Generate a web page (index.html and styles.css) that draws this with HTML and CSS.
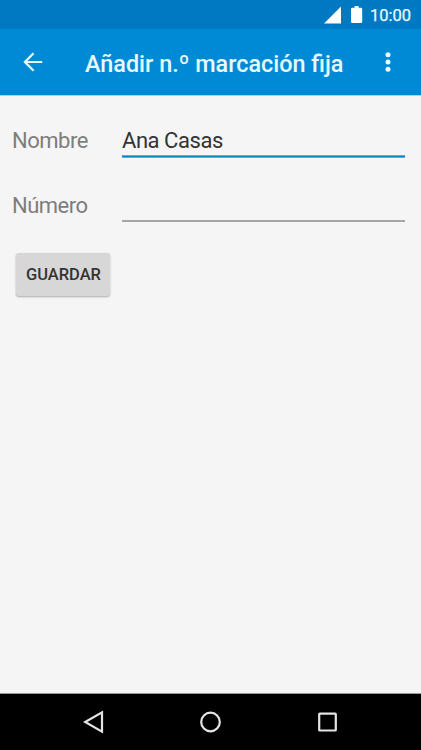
FILE: index.html
```html
<!DOCTYPE html>
<html lang="es">
<head>
<meta charset="utf-8">
<title>Añadir n.º marcación fija</title>
<link rel="stylesheet" href="styles.css">
</head>
<body>
<div class="screen">
  <div class="status">
    <svg class="signal" width="18" height="18" viewBox="0 0 18 18"><path d="M0 17.600 17 .6v17z" fill="#fff"/></svg>
    <svg class="battery" width="12" height="18" viewBox="0 0 12 18"><path d="M3.600 0h4v1.800H10q1.200 0 1.200 1.200v12.800q0 1.200-1.200 1.200H1.200Q0 17 0 15.800V3q0-1.200 1.200-1.200h2.400z" fill="#fff"/></svg>
    <span class="clock">10:00</span>
  </div>
  <header class="bar">
    <svg class="back" width="20" height="20" viewBox="0 0 20 20" fill="none" stroke="#e6fbff" stroke-width="2.200"><path d="M19.200 10H2.200M10.600 1.300 1.900 10l8.700 8.700"/></svg>
    <h1 class="title">Añadir n.º marcación fija</h1>
    <svg class="more" width="6" height="20" viewBox="0 0 6 20" fill="#e6fbff"><circle cx="3" cy="2.800" r="2.500"/><circle cx="3" cy="10" r="2.500"/><circle cx="3" cy="17.200" r="2.500"/></svg>
  </header>
  <main class="form">
    <div class="row">
      <span class="label">Nombre</span>
      <div class="field active">Ana Casas</div>
    </div>
    <div class="row">
      <span class="label">Número</span>
      <div class="field"></div>
    </div>
    <button class="save">GUARDAR</button>
  </main>
  <nav class="nav">
    <svg width="22" height="24" viewBox="0 0 22 24"><path d="M2.200 12 19 2.300v19.400z"/></svg>
    <svg width="22" height="24" viewBox="0 0 22 24"><circle cx="10.500" cy="12" r="9.300"/></svg>
    <svg width="22" height="24" viewBox="0 0 22 24"><rect x="2.200" y="3.700" width="16.600" height="16.800" rx=".5"/></svg>
  </nav>
</div>
</body>
</html>
```
FILE: styles.css
```css
* { box-sizing: border-box; }
body { margin: 0; font-family: Roboto, "Liberation Sans", sans-serif; }
svg { display: block; flex: none; }
.screen {
  width: 421px;
  height: 750px;
  display: flex;
  flex-direction: column;
  background: #f5f5f5;
  overflow: hidden;
}
.status {
  height: 29px;
  flex: none;
  background: #0079c3;
  display: flex;
  align-items: flex-start;
  padding: 6px 0 0 324px;
}
.battery { margin-left: 9px; }
.clock {
  margin-left: 7px;
  font-size: 16.500px;
  line-height: 20px;
  color: #e6fbff;
  font-weight: 400;
  -webkit-text-stroke: .25px #e6fbff;
}
.bar {
  height: 67px;
  flex: none;
  background: #008ad6;
  border-bottom: 1px solid #a5d3ec;
  display: flex;
  align-items: center;
  padding-left: 23px;
}
.title {
  margin: 3px 0 0 42px;
  width: 300px;
  font-size: 23.400px;
  line-height: 30px;
  font-weight: 500;
  color: #e6fbff;
  white-space: nowrap;
}
.form { flex: 1; padding: 29px 16px 0 12px; }
.row { display: flex; height: 65px; }
.label {
  width: 110px;
  font-size: 22px;
  line-height: 31px;
  letter-spacing: -.5px;
  color: #7d7d7d;
}
.field {
  flex: 1;
  height: 32px;
  border-bottom: 2px solid #a6a6a6;
  font-size: 22px;
  line-height: 31px;
  letter-spacing: -.45px;
  color: #333;
}
.field.active {
  height: 33px;
  border-bottom: 0;
  background: linear-gradient(#4ab4e0 0 1px, #0f86c4 1px 2px, #4ab4e0 2px) bottom / 100% 3px no-repeat;
}
.save {
  display: block;
  width: 94px;
  height: 43px;
  margin: -2px 0 0 4px;
  padding: 1px 0 0 1px;
  border: 0;
  border-radius: 3px;
  background: #d7d7d7;
  box-shadow: 0 1px 2px rgba(0, 0, 0, .3);
  font: 500 16.500px/42px Roboto, "Liberation Sans", sans-serif;
  letter-spacing: -.05px;
  color: #333;
}
.nav {
  height: 57px;
  flex: none;
  background: #000;
  border-top: 1px solid #999;
  display: flex;
  justify-content: center;
  align-items: center;
  gap: 95px;
}
.nav svg { fill: none; stroke: #e4e4e4; stroke-width: 2.200; }
```
